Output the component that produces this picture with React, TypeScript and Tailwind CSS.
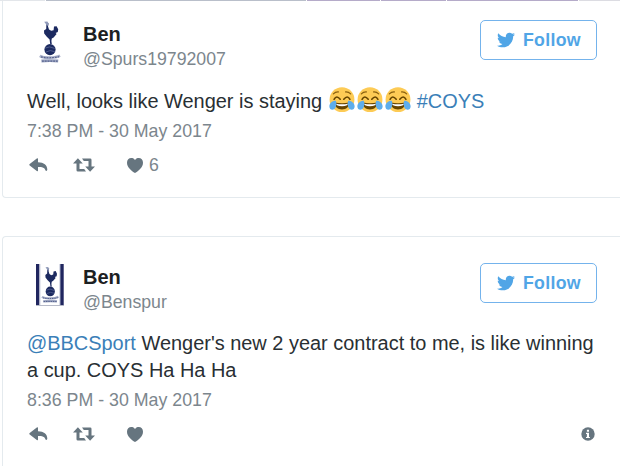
import type { ReactNode } from "react"
import { FaTwitter } from "react-icons/fa"
import clsx from "clsx"

function Cockerel() {
  return (
    <>
      <g fill="#1c2a60">
        <path d="M9.4 2.8 L11.6 2.2 L11 5.4 L12 8.6 L14.2 9.8 L16.6 9.2 L17 5.6 L19.6 5.2 L21.2 8.2 L20.8 11 L18.6 12 L19.6 13 L16.6 16.4 L14.8 17.4 L14.4 20 L14.8 23 L13.2 23 L12.6 18.4 L9.8 15.8 L7.2 12.4 L7 9.6 L9.2 8 Z" />
        <circle cx="13" cy="28.6" r="5.6" />
      </g>
      <path d="M7.2 .8 L10.4 .4 L11.6 2.4 L11 5 L9.6 4 Z" fill="#8f99b8" />
      <path d="M8.2 27 Q12.5 24.6 17.6 27.4 M9 31 Q13 28.4 17.8 30.6" stroke="#5d6a98" strokeWidth=".8" fill="none" />
      <path d="M2.8 34.8 Q6 36.8 12.8 36.6 Q19.6 36.6 23 34.6" stroke="#a9b0c9" strokeWidth="2.6" fill="none" />
      <path d="M4.4 40 Q13 39.2 21.2 40" stroke="#9aa3c0" strokeWidth="2.8" fill="none" />
      <path d="M4 35.8 Q13 37.8 22 35.6 M5 40.2H20.6" stroke="#59658f" strokeWidth="1.2" strokeDasharray="1.8 1" fill="none" />
    </>
  )
}

function Avatar({ striped }: { striped?: boolean }) {
  return (
    <svg className="h-[42px] w-7 shrink-0" viewBox="0 0 28 42">
      {striped ? (
        <>
          <path d="M0 0H3.5V42H0Z M24.2 0H27.7V42H24.2Z" fill="#20265f" />
          <path d="M4 0V42 M23.7 0V42" stroke="#cfd3e2" />
          <path d="M0 41.5H28" stroke="#b6bac8" />
          <g transform="translate(3.6 2.6) scale(.82 .87)">
            <Cockerel />
          </g>
        </>
      ) : (
        <Cockerel />
      )}
    </svg>
  )
}

function ReplyIcon() {
  return (
    <svg className="h-[14px] w-[19px]" viewBox="0 0 19 14" fill="#66757f">
      <path d="M9 .9V4.2C14.8 4.2 18.3 7 18.3 11.6C18.3 13.3 16.7 13.4 16.3 12C15.6 9.6 13.4 8.9 9 8.9V12.5C9 13.3 8.4 13.5 7.8 13L.7 7.6C.2 7.2.2 6.5.7 6.1L7.8.6C8.4.1 9 .2 9 .9Z" />
    </svg>
  )
}

function RetweetIcon() {
  const arrow = "M4.9 .3L9.8 5.5H6.5V10.9H11.2L13 13.6H4.9Q3.5 13.6 3.5 12.2V5.5H0Z"
  return (
    <svg className="h-[14px] w-[22px]" viewBox="0 0 22 14" fill="#66757f">
      <path d={arrow} />
      <path d={arrow} transform="rotate(180 11 7)" />
    </svg>
  )
}

function HeartIcon() {
  return (
    <svg className="h-[15px] w-4" viewBox="0 0 16 15" fill="#66757f">
      <path d="M8 2C9.2.3 10.6 0 11.7 0C14.2 0 16 2 16 4.7C16 9.2 11.5 13 8 15C4.5 13 0 9.2 0 4.7C0 2 1.8 0 4.3 0C5.4 0 6.8.3 8 2Z" />
    </svg>
  )
}

function InfoIcon() {
  return (
    <svg className="h-[14px] w-[14px]" viewBox="0 0 14 14">
      <circle cx="7" cy="7" r="6.7" fill="#66757f" />
      <path d="M5.9 2.8H8V4.7H5.9Z M5 5.8H8V9.9H8.9V11.1H5V9.9H5.9V7H5Z" fill="#fff" />
    </svg>
  )
}

function JoyEmoji() {
  return (
    <svg className="h-[26px] w-[26px]" viewBox="0 0 36 36">
      <circle cx="18" cy="17.5" r="17.2" fill="#fdcb55" />
      <path d="M8 21.5Q18 23.5 28 21.5Q27.5 31 18 31Q8.5 31 8 21.5Z" fill="#664500" />
      <path d="M9.7 23.2Q18 24.8 26.3 23.2Q26 26.5 18 26.5Q10 26.5 9.7 23.2Z" fill="#fff" />
      <path d="M7 17Q10.5 10.5 15.5 17 M20.5 17Q25.5 10.5 29 17" stroke="#664500" strokeWidth="2.2" strokeLinecap="round" fill="none" />
      <path d="M6 9.5Q9 6.5 13 6.8 M30 9.5Q27 6.5 23 6.8" stroke="#8a6110" strokeWidth="1.7" strokeLinecap="round" fill="none" />
      <path d="M9.5 19C5 18.5 .5 22 .5 27C.5 31 4.5 33 7.5 30.5C10.5 28 10.5 22.5 9.5 19Z M26.5 19C31 18.5 35.5 22 35.5 27C35.5 31 31.5 33 28.5 30.5C25.5 28 25.5 22.5 26.5 19Z" fill="#5dadec" />
    </svg>
  )
}

interface TweetProps {
  handle: string
  time: string
  children: ReactNode
  likes?: number
  striped?: boolean
  info?: boolean
  className?: string
}

function Tweet({ handle, time, children, likes, striped, info, className }: TweetProps) {
  return (
    <article className={clsx("ml-[2px] border-l border-[#e4eaee] bg-white pl-6 pr-[23px]", className)}>
      <header className={clsx("flex items-start", striped ? "h-[42px]" : "h-[43px]")}>
        <div className={striped ? "ml-[9px] mt-px" : "ml-[10px] mt-px"}>
          <Avatar striped={striped} />
        </div>
        <div className={clsx("mt-px flex-1", striped ? "ml-[19px]" : "ml-[18px]")}>
          <div className="text-[20px] font-bold leading-[26px] text-[#1c2022]">Ben</div>
          <div className="text-[17.7px] leading-6 text-[#7c868d]">{handle}</div>
        </div>
        <button className="flex h-10 w-[117px] items-center rounded-[5px] border-[1.5px] border-[#74b3ec] pl-4 text-[#50a5e6]">
          <FaTwitter className="h-[18px] w-[18px]" />
          <span className="ml-2 text-[17.7px] font-bold tracking-[0.3px]">Follow</span>
        </button>
      </header>

      <p className="mt-[25px] whitespace-nowrap text-[19.94px] leading-[27px] text-[#292f33]">{children}</p>
      <time className="mt-1 block text-[17.8px] leading-6 text-[#7c868d]">{time}</time>

      <footer className="mt-[10px] flex h-6 items-center pl-[2px]">
        <ReplyIcon />
        <div className="ml-[25px]">
          <RetweetIcon />
        </div>
        <div className="ml-8">
          <HeartIcon />
        </div>
        {likes && <span className="ml-[6px] text-[17.7px] text-[#7c868d]">{likes}</span>}
        {info && (
          <div className="ml-auto mr-[2px]">
            <InfoIcon />
          </div>
        )}
      </footer>
    </article>
  )
}

export default function App() {
  return (
    <div className="h-[466px] w-[620px] overflow-hidden bg-white font-['Liberation_Sans',Arial,sans-serif]">
      <div className="flex h-px gap-px">
        <div className="w-[45px] bg-[#e3e6ea]" />
        <div className="w-[260px] bg-[#b9bfca]" />
        <div className="w-[73px] bg-[#b5abc9]" />
        <div className="w-[65px] bg-[#b5abc9]" />
        <div className="w-[131px] bg-[#b5abc9]" />
        <div className="flex-1 bg-[#dcdce2]" />
      </div>

      <Tweet
        handle="@Spurs19792007"
        time="7:38 PM - 30 May 2017"
        likes={6}
        className="h-[197px] rounded-bl-[4px] border-b pt-[19px]"
      >
        Well, looks like Wenger is staying{" "}
        <span className="-my-1 ml-[1.5px] inline-flex gap-[2px] align-[-5px]">
          <JoyEmoji />
          <JoyEmoji />
          <JoyEmoji />
        </span>{" "}
        <span className="text-[#3b7fb8]">#COYS</span>
      </Tweet>

      <Tweet
        handle="@Benspur"
        time="8:36 PM - 30 May 2017"
        striped
        info
        className="mt-[38px] h-[240px] rounded-tl-[4px] border-t pt-[26px]"
      >
        <span className="text-[#3b7fb8]">@BBCSport</span> Wenger's new 2 year contract to me, is like winning
        <br />a cup. COYS Ha Ha Ha
      </Tweet>
    </div>
  )
}
